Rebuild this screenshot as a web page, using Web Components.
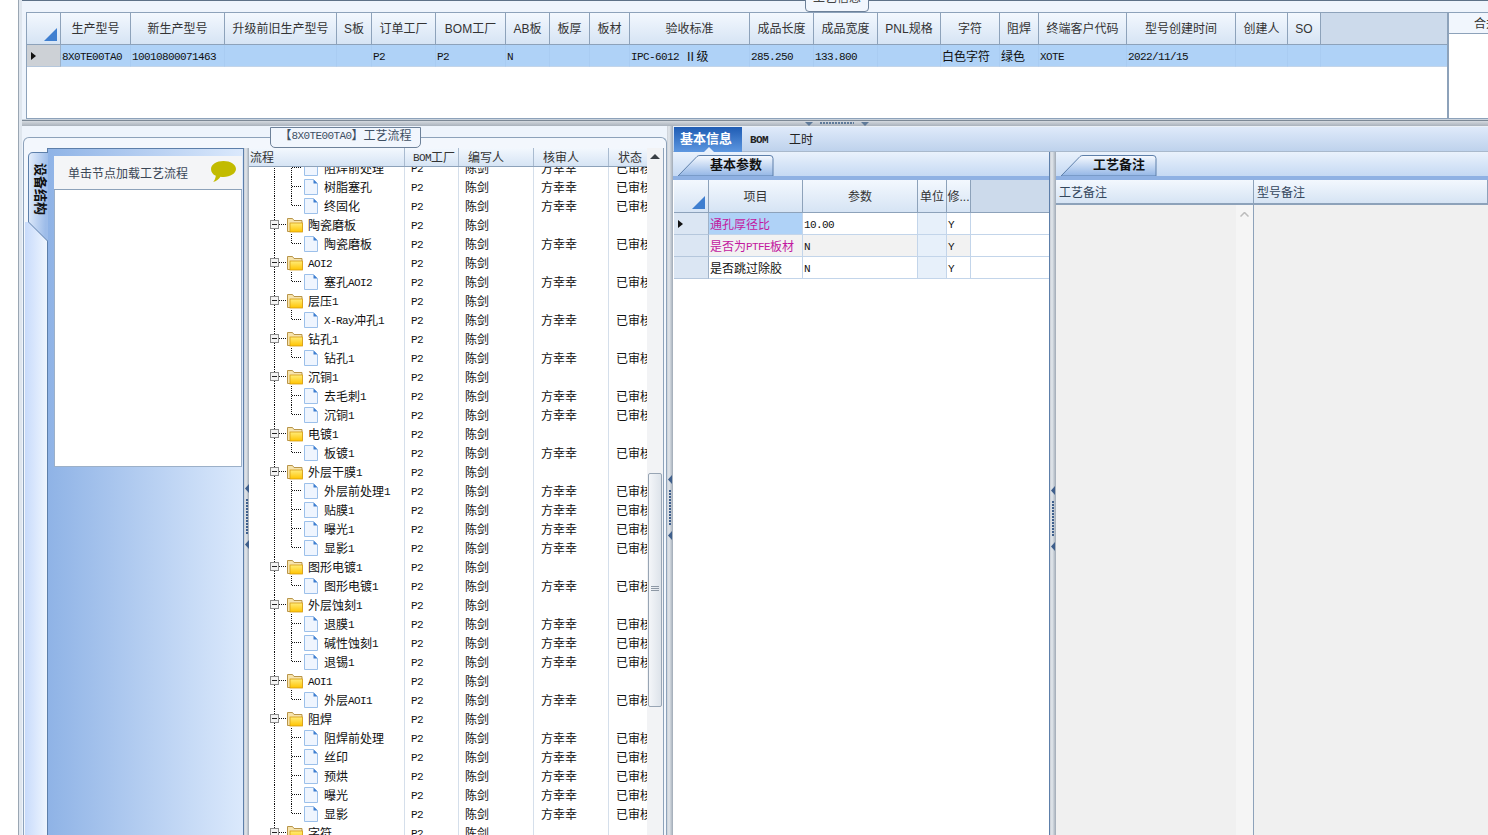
<!DOCTYPE html>
<html lang="zh">
<head>
<meta charset="utf-8">
<title>工艺信息</title>
<style>
    html, body { margin: 0; height: 100%; overflow: hidden; background: #fff; }
    body { font: 12px/19px "Noto Sans CJK SC", sans-serif; color: #111; }
</style>
</head>
<body>

<erp-shell>
    <erp-top-panel slot="top" caption="工艺信息">
        <erp-grid
            widths="34,70,94,112,35,64,70,44,40,40,120,64,64,63,59,39,88,109,52,33,1fr"
            head="生产型号|新生产型号|升级前旧生产型号|S板|订单工厂|BOM工厂|AB板|板厚|板材|验收标准|成品长度|成品宽度|PNL规格|字符|阻焊|终端客户代码|型号创建时间|创建人|SO|"
            headheight="32"
            rowheight="22"
            rows='[{"sel":true,"cells":["8X0TE00TA0","10010800071463","","","P2","P2","N","","","IPC-6012&nbsp;&nbsp;Ⅱ级","285.250","133.800","","白色字符","绿色","XOTE","2022/11/15","","",""]}]'></erp-grid>
    </erp-top-panel>
    <erp-splitter slot="top" dir="h"></erp-splitter>

    <erp-flow-panel slot="left" caption="【8X0TE00TA0】工艺流程" hint="单击节点加载工艺流程" side="设备结构">
        <erp-tree-grid></erp-tree-grid>
    </erp-flow-panel>
    <erp-splitter slot="left" dir="v" grip="349"></erp-splitter>

    <erp-detail-panel slot="right"></erp-detail-panel>
</erp-shell>

<script>
// latin runs are narrower than the cjk ones, like the old bitmap song font
function lat(text) {
    return text.replace(/[A-Za-z0-9.\-\/]+( ?[A-Za-z0-9.\-\/]+)*/g, (m) => m == "nbsp" ? m : `<span class="l">${m}</span>`);
}

const LATIN_CSS = `.l { font: 11px/1 "Liberation Mono", monospace; letter-spacing: -.6px; vertical-align: 1px; }`;

class ErpShell extends HTMLElement {
    constructor() {
        super();
        this.attachShadow({ mode: "open" });
        this.shadowRoot.innerHTML = `
            <style>
                :host {
                    display: flex;
                    flex-direction: column;
                    box-sizing: border-box;
                    height: 835px;
                    margin-left: 18px;
                    padding-left: 3px;
                    background: #dfe6ee;
                    border-left: 1px solid #9aa6b3;
                    overflow: hidden;
                }
                .bottom {
                    display: flex;
                    flex: 1;
                    min-height: 0;
                }
            </style>
            <slot name="top"></slot>
            <div class="bottom">
                <slot name="left"></slot>
                <slot name="right"></slot>
            </div>
        `;
    }
}

class ErpTopPanel extends HTMLElement {
    constructor() {
        super();
        this.attachShadow({ mode: "open" });
        this.shadowRoot.innerHTML = `
            <style>
                :host {
                    display: flex;
                    position: relative;
                    box-sizing: border-box;
                    height: 119px;
                    padding: 11px 0 0 4px;
                    background: #eef4fc;
                    border-top: 1px solid #5d7187;
                }
                .wrap {
                    display: flex;
                    flex: 1;
                    border: 1px solid #8da2ba;
                    border-right: 0;
                    background: #fff;
                }
                ::slotted(erp-grid) { flex: none; width: 1420px; }
                .side {
                    flex: 1;
                    border-left: 2px solid #8da2ba;
                    overflow: hidden;
                }
                .side div {
                    height: 20px;
                    padding-left: 25px;
                    line-height: 20px;
                    white-space: nowrap;
                    background: #f1f6fd;
                    border-bottom: 1px solid #8da2ba;
                    color: #333;
                }
                .tab {
                    position: absolute;
                    left: 783px;
                    top: -10px;
                    width: 62px;
                    height: 19px;
                    text-align: center;
                    line-height: 10px;
                    background: #f1f6fd;
                    border: 1px solid #6d8199;
                    border-radius: 0 0 4px 4px;
                    color: #444;
                }
            </style>
            <div class="tab"></div>
            <div class="wrap">
                <slot></slot>
                <div class="side"><div>合并拼板</div></div>
            </div>
        `;
        this.shadowRoot.querySelector(".tab").textContent = this.getAttribute("caption");
    }
}

class ErpGrid extends HTMLElement {
    connectedCallback() {
        const widths = this.getAttribute("widths").split(",").map((w) => w.endsWith("fr") ? w : w + "px").join(" ");
        const head = this.getAttribute("head").split("|");
        const headHeight = this.getAttribute("headheight");
        const rowHeight = this.getAttribute("rowheight");
        const rows = JSON.parse(this.getAttribute("rows"));

        const headCells = head.map((h, i) => {
            const filler = i == head.length - 1 && h == "";
            return `<div class="h${filler ? " filler" : ""}">${h}</div>`;
        }).join("");

        const rowCells = rows.map((row) => {
            const marker = row.sel ? `<svg width="5" height="8" viewBox="0 0 5 8"><path d="M0 0l5 4-5 4z" fill="#111"/></svg>` : "";
            const cells = row.cells.map((c) => {
                const cell = typeof c == "string" ? { t: c } : c;
                return `<div class="c ${cell.k || ""}">${lat(cell.t)}</div>`;
            }).join("");
            return `<div class="rh ${row.sel ? "cur" : ""}">${marker}</div><div class="row ${row.sel ? "sel" : ""} ${row.alt ? "alt" : ""}">${cells}</div>`;
        }).join("");

        this.attachShadow({ mode: "open" });
        this.shadowRoot.innerHTML = `
            <style>
                :host { display: block; overflow: hidden; }
                .grid {
                    display: grid;
                    grid-template-columns: ${widths};
                    grid-auto-rows: ${rowHeight}px;
                    grid-template-rows: ${headHeight}px;
                }
                .corner, .h {
                    box-sizing: border-box;
                    background: linear-gradient(#f3f8fe, #d6e4f4);
                    border-right: 1px solid #8da2ba;
                    border-bottom: 1px solid #8da2ba;
                }
                .corner { position: relative; }
                .corner svg { position: absolute; right: 3px; bottom: 3px; }
                .h {
                    display: flex;
                    align-items: center;
                    justify-content: center;
                    padding-top: 2px;
                    white-space: nowrap;
                    overflow: hidden;
                    color: #333;
                    font-family: "Liberation Sans", "Noto Sans CJK SC", sans-serif;
                }
                .h.filler { background: #ccdaeb; border-right: 0; }
                .rh {
                    box-sizing: border-box;
                    display: flex;
                    align-items: center;
                    padding-left: 4px;
                    background: #dbe6f3;
                    border-right: 1px solid #9fb2c8;
                    border-bottom: 1px solid #b5c7dc;
                }
                .rh.cur { background: var(--cur-bg, #cdd1d6); }
                .row { display: contents; }
                .c {
                    box-sizing: border-box;
                    padding-left: 1px;
                    line-height: 21px;
                    white-space: nowrap;
                    overflow: hidden;
                    border-right: 1px solid var(--line, #c3d5ea);
                    border-bottom: 1px solid var(--line, #c3d5ea);
                }
                .c:last-child { border-right: 0; }
                .row.sel .c { background: var(--sel-bg, #afd2f7); border-color: var(--sel-line, #a9ccf2); border-bottom-color: var(--line, #c3d5ea); }
                .row.alt .c { background: #f2f2f2; }
                .row.alt .c:last-child { background: #fff; }
                .row .c.pick { background: #afd2f7; }
                .row .c.mag { color: #c2189f; }
                .row .c.unit { background: #e7f0fa; }
                ${LATIN_CSS}
            </style>
            <div class="grid">
                <div class="corner"><svg width="13" height="13" viewBox="0 0 13 13"><path d="M13 0v13H0z" fill="#3f7fd0"/></svg></div>
                ${headCells}
                ${rowCells}
            </div>
        `;
    }
}

class ErpSplitter extends HTMLElement {
    connectedCallback() {
        const dir = this.getAttribute("dir");
        const grip = this.getAttribute("grip") || 0;
        const arrow = dir == "h"
            ? `<svg width="8" height="4" viewBox="0 0 8 4"><path d="M0 0h8l-4 4z" fill="#5f7a99"/></svg>`
            : `<svg width="4" height="9" viewBox="0 0 4 9"><path d="M4 0v9L0 4.500z" fill="#3f5f8c"/></svg>`;
        this.attachShadow({ mode: "open" });
        this.shadowRoot.innerHTML = `
            <style>
                :host { display: flex; flex: none; }
                :host([dir="h"]) {
                    height: 7px;
                    justify-content: center;
                    gap: 7px;
                    padding-left: 164px;
                    align-items: flex-start;
                    background: linear-gradient(#c9d2dc 0, #c9d2dc 1px, #7d8996 1px, #7d8996 2px, #d4d9df 2px, #aab2bc 100%);
                }
                :host([dir="v"]) {
                    width: 6px;
                    flex-direction: column;
                    align-items: center;
                    gap: 6px;
                    padding-top: ${grip}px;
                    box-sizing: border-box;
                    background: linear-gradient(90deg, #c9ced6 0, #e2e7ec 2px, #a0aab6 100%);
                }
                :host([thin]) { width: 5px; }
                :host([dir="h"]) .dots {
                    width: 34px;
                    height: 2px;
                    margin-top: 3px;
                    background: repeating-linear-gradient(90deg, #5f7a99 0 2px, transparent 2px 3px);
                }
                :host([dir="v"]) .dots {
                    width: 2px;
                    height: 35px;
                    background: repeating-linear-gradient(#3f5f8c 0 2px, transparent 2px 3px);
                }
                :host([dir="h"]) svg { margin-top: 3px; }
            </style>
            ${arrow}<div class="dots"></div>${arrow}
        `;
    }
}

class ErpFlowPanel extends HTMLElement {
    constructor() {
        super();
        this.attachShadow({ mode: "open" });
        this.shadowRoot.innerHTML = `
            <style>
                :host {
                    display: flex;
                    flex-direction: column;
                    flex: none;
                    position: relative;
                    box-sizing: border-box;
                    width: 645px;
                    background: #eef4fc;
                    padding: 11px 0 0 1px;
                }
                .caption {
                    position: absolute;
                    left: 248px;
                    top: 1px;
                    width: 149px;
                    height: 19px;
                    text-align: center;
                    line-height: 14px;
                    background: #f1f6fd;
                    border: 1px solid #6d8199;
                    border-radius: 0 0 5px 5px;
                    z-index: 1;
                    color: #3e4f63;
                }
                ${LATIN_CSS}
                .frame {
                    flex: 1;
                    display: flex;
                    min-height: 0;
                    box-sizing: border-box;
                    padding: 10px 2px 0 1px;
                    background: #f3f7fd;
                    border: 1px solid #8da2ba;
                    border-bottom: 0;
                    border-radius: 6px 6px 0 0;
                }
                .rail {
                    flex: none;
                    width: 22px;
                    padding: 4px 0 0 3px;
                    box-sizing: border-box;
                    background: linear-gradient(90deg, #c8dbfb, #eef5fe) no-repeat 0 74px;
                }
                .sidetab {
                    position: relative;
                    isolation: isolate;
                    box-sizing: border-box;
                    height: 90px;
                    width: 20px;
                    padding: 11px 0 0 4px;
                    writing-mode: vertical-rl;
                    text-orientation: sideways;
                    font-size: 13px;
                    font-weight: 700;
                    line-height: 14px;
                    color: #111;
                }
                .sidetab svg { position: absolute; left: 0; top: 0; z-index: -1; }
                .tree-side {
                    flex: none;
                    display: flex;
                    flex-direction: column;
                    width: 197px;
                    padding: 7px 1px 0 6px;
                    box-sizing: border-box;
                    background: linear-gradient(90deg, #8fb3e6, #dbe9fc);
                    border-top: 1px solid #5d7faa;
                    border-left: 1px solid #5d7faa;
                    border-right: 1px solid #5d7faa;
                }
                .hint {
                    display: flex;
                    align-items: center;
                    justify-content: space-between;
                    box-sizing: border-box;
                    height: 34px;
                    padding: 0 6px 1px 14px;
                    background: #f4f5f7;
                    border-bottom: 1px solid #8da2ba;
                    color: #3a4656;
                }
                .card {
                    height: 277px;
                    background: #fff;
                    border: 1px solid #9cb0c8;
                    border-top: 0;
                    box-sizing: border-box;
                }
                .spring { flex: 1; }
                ::slotted(erp-tree-grid) { flex: 1; min-width: 0; }
            </style>
            <div class="caption"></div>
            <div class="frame">
                <div class="rail"><div class="sidetab">
                    <svg width="20" height="90" viewBox="0 0 20 90">
                        <defs><linearGradient id="st" x1="0" y1="0" x2="1" y2=".2"><stop offset="0" stop-color="#e6effc"/><stop offset="1" stop-color="#9dbce9"/></linearGradient></defs>
                        <path d="M20 .5H5Q.5 .5 .5 5V70L20 89.500z" fill="url(#st)"/>
                        <path d="M20 .5H5Q.5 .5 .5 5V70L20 89.500" fill="none" stroke="#5d7faa"/>
                    </svg><span class="side-text"></span></div></div>
                <div class="tree-side">
                    <div class="hint">
                        <span class="hint-text"></span>
                        <svg width="25" height="22" viewBox="0 0 24 21"><path d="M12 0c6.600 0 12 3.400 12 7.600 0 4.200-5.400 7.600-12 7.600-1 0-2-.1-2.900-.2-1.600 2.200-4 4.400-7 5 1.300-1.500 2.300-3.500 2.500-5.900C1.800 13 0 10.500 0 7.600 0 3.400 5.400 0 12 0z" fill="#c2bb00"/></svg>
                    </div>
                    <div class="card"></div>
                    <div class="spring"></div>
                </div>
                <erp-splitter dir="v" grip="336" thin></erp-splitter>
                <slot></slot>
            </div>
        `;
        this.shadowRoot.querySelector(".caption").innerHTML = lat(this.getAttribute("caption"));
        this.shadowRoot.querySelector(".hint-text").textContent = this.getAttribute("hint");
        this.shadowRoot.querySelector(".side-text").textContent = this.getAttribute("side");
    }
}

const FLOW = [
    ["阻焊前处理", 1], ["树脂塞孔", 1], ["终固化", 1],
    ["陶瓷磨板", 0], ["陶瓷磨板", 1],
    ["AOI2", 0], ["塞孔AOI2", 1],
    ["层压1", 0], ["X-Ray冲孔1", 1],
    ["钻孔1", 0], ["钻孔1", 1],
    ["沉铜1", 0], ["去毛刺1", 1], ["沉铜1", 1],
    ["电镀1", 0], ["板镀1", 1],
    ["外层干膜1", 0], ["外层前处理1", 1], ["贴膜1", 1], ["曝光1", 1], ["显影1", 1],
    ["图形电镀1", 0], ["图形电镀1", 1],
    ["外层蚀刻1", 0], ["退膜1", 1], ["碱性蚀刻1", 1], ["退锡1", 1],
    ["AOI1", 0], ["外层AOI1", 1],
    ["阻焊", 0], ["阻焊前处理", 1], ["丝印", 1], ["预烘", 1], ["曝光", 1], ["显影", 1],
    ["字符", 0]
];

class ErpTreeGrid extends HTMLElement {
    constructor() {
        super();
        this.attachShadow({ mode: "open" });

        const dotted = `stroke="#111" stroke-dasharray="1 1" fill="none" shape-rendering="crispEdges"`;
        const rows = FLOW.map(([name, level], i) => {
            const next = FLOW[i + 1];
            const last = !next || next[1] == 0;
            let art;
            if (level == 0) {
                art = `<svg width="59" height="19" viewBox="0 0 59 19">
                    <defs><linearGradient id="fo" x1="0" y1="0" x2="0" y2="1"><stop offset="0" stop-color="#ffec7a"/><stop offset="1" stop-color="#ffc400"/></linearGradient></defs>
                    <path d="M25.500 0V19M30 9.500H37" ${dotted}/>
                    <rect x="21.500" y="5.500" width="8" height="8" fill="#f4f4f4" stroke="#8c8c8c"/>
                    <path d="M23 9.500h5" stroke="#222"/>
                    <path d="M38.500 3.500h5l1.500 2h8v11h-14.500z" fill="#f7e4ad" stroke="#b8954a"/>
                    <rect x="41" y="8" width="12.500" height="9" fill="url(#fo)" stroke="#d69b10" stroke-width=".8"/>
                </svg>`;
            } else {
                art = `<svg width="75" height="19" viewBox="0 0 75 19">
                    <path d="M25.500 0V19M42.500 0V${last ? 9.5 : 19}M42.500 9.500H52" ${dotted}/>
                    <path d="M55.500 2.500h9l4 4v11h-13z" fill="#eff5fe" stroke="#9cc0ea"/>
                    <path d="M64.500 2.500v4h4z" fill="#3f7fd0"/>
                </svg>`;
            }
            const reviewer = level == 0 ? "" : "方幸幸";
            const state = level == 0 ? "" : "已审核";
            return `<div class="row">
                <div class="name">${art}<span>${lat(name)}</span></div>
                <div class="c">${lat("P2")}</div>
                <div class="c">陈剑</div>
                <div class="c r">${reviewer}</div>
                <div class="c r st">${state}</div>
            </div>`;
        }).join("");

        this.shadowRoot.innerHTML = `
            <style>
                :host { display: block; position: relative; overflow: hidden; background: #fff; }
                .head, .row {
                    display: grid;
                    grid-template-columns: 156px 54px 75px 75px 38px;
                }
                .head {
                    position: relative;
                    z-index: 1;
                    height: 19px;
                    line-height: 18px;
                    background: linear-gradient(#f3f8fe, #d6e4f4);
                    border-bottom: 1px solid #8da2ba;
                    box-sizing: border-box;
                }
                .head div {
                    padding-left: 9px;
                    border-right: 1px solid #a9bbd0;
                    white-space: nowrap;
                    overflow: hidden;
                    color: #333;
                }
                .head div:first-child { padding-left: 1px; }
                .head div:nth-child(2) { padding-left: 8px; }
                .head div:last-child { border-right: 0; }
                .body { position: relative; margin-top: -9px; }
                .row { height: 19px; line-height: 19px; }
                .name { display: flex; white-space: nowrap; border-right: 1px solid #d5dfeb; }
                .name svg { flex: none; }
                .c {
                    padding-left: 6px;
                    white-space: nowrap;
                    overflow: hidden;
                    border-right: 1px solid #d5dfeb;
                }
                .c.r { padding-left: 7px; }
                .c.st { border-right: 0; }
                ${LATIN_CSS}
                .bar {
                    position: absolute;
                    right: 1px;
                    top: 0;
                    bottom: 0;
                    width: 16px;
                    z-index: 2;
                    background: #f2f3f5;
                    box-shadow: 1px 0 0 #8da2ba;
                }
                .up { position: absolute; left: 3px; top: 6px; }
                .thumb {
                    position: absolute;
                    top: 325px;
                    left: 1px;
                    width: 14px;
                    height: 234px;
                    box-sizing: border-box;
                    background: linear-gradient(90deg, #f4f6f9, #dde3ea);
                    border: 1px solid #98a5b4;
                    border-radius: 2px;
                }
                .thumb i {
                    position: absolute;
                    left: 2px;
                    right: 2px;
                    top: 112px;
                    height: 6px;
                    background: repeating-linear-gradient(#8d98a5 0 1px, transparent 1px 2px);
                }
            </style>
            <div class="head">
                <div>流程</div>
                <div>${lat("BOM")}工厂</div>
                <div>编写人</div>
                <div>核审人</div>
                <div>状态</div>
            </div>
            <div class="body">${rows}</div>
            <div class="bar">
                <svg class="up" width="10" height="5" viewBox="0 0 10 5"><path d="M0 5L5 0l5 5z" fill="#3a3f45"/></svg>
                <div class="thumb"><i></i></div>
            </div>
        `;
    }
}

class ErpSubTab extends HTMLElement {
    constructor() {
        super();
        this.attachShadow({ mode: "open" });
        this.shadowRoot.innerHTML = `
            <style>
                :host {
                    display: block;
                    flex: none;
                    height: 28px;
                    box-sizing: border-box;
                    border-bottom: 4px solid #8fb1e3;
                    background: linear-gradient(#eaf2fc, #c5d9f3);
                    position: relative;
                }
                svg { position: absolute; left: 1px; top: 3px; }
                span {
                    position: absolute;
                    left: 37px;
                    top: 3px;
                    font-size: 13px;
                    font-weight: 700;
                    line-height: 18px;
                    color: #111;
                }
            </style>
            <svg width="101" height="21" viewBox="0 0 101 21">
                <defs><linearGradient id="tb" x1="0" y1="0" x2="0" y2="1"><stop offset="0" stop-color="#f8fbff"/><stop offset="1" stop-color="#93b6e6"/></linearGradient></defs>
                <path d="M4 21L23 1.500q1-1 3-1h70q3 0 3 3V21z" fill="url(#tb)" stroke="#5d7faa"/>
            </svg>
            <span><slot></slot></span>
        `;
    }
}

class ErpDetailPanel extends HTMLElement {
    constructor() {
        super();
        this.attachShadow({ mode: "open" });
        this.shadowRoot.innerHTML = `
            <style>
                :host {
                    display: flex;
                    flex-direction: column;
                    flex: 1;
                    min-width: 0;
                    background: #fff;
                }
                .tabs {
                    flex: none;
                    display: flex;
                    align-items: center;
                    height: 26px;
                    padding-left: 1px;
                    box-sizing: border-box;
                    background: linear-gradient(#dfeafa, #bed2ec);
                    border-top: 1px solid #eaf0f7;
                    border-bottom: 1px solid #a9b9cc;
                }
                .tab { padding: 0 8px; font-size: 12px; line-height: 22px; color: #222; }
                .tab.bom { width: 19px; padding: 0 10px 0 8px; margin-right: 2px; }
                .tab.bom .l { font-weight: 700; }
                .tab.on {
                    position: relative;
                    width: 68px;
                    height: 25px;
                    box-sizing: border-box;
                    padding: 0 0 0 6px;
                    font-size: 13px;
                    font-weight: 700;
                    color: #fff;
                    background: linear-gradient(#1f5cb4, #5d97e0);
                }
                .tab.on::after {
                    content: "";
                    position: absolute;
                    left: 30px;
                    bottom: 0;
                    border: 5px solid transparent;
                    border-top: 0;
                    border-bottom-color: #e8f0fb;
                }
                ${LATIN_CSS}
                .panes { flex: 1; display: flex; min-height: 0; }
                .pane { display: flex; flex-direction: column; min-width: 0; }
                .pane.params { flex: none; box-sizing: border-box; width: 377px; border-right: 1px solid #5d7faa; }
                .pane.notes { flex: 1; }
                .params-body { flex: 1; padding-left: 1px; background: #fff; }
                .params-body erp-grid { --sel-bg: #fff; --sel-line: #c3d5ea; --cur-bg: #dbe6f3; }
                .notes-grid { flex: 1; display: grid; grid-template-columns: 198px 1fr; grid-template-rows: 25px 1fr; min-height: 0; }
                .nh {
                    padding-left: 3px;
                    line-height: 23px;
                    white-space: nowrap;
                    overflow: hidden;
                    color: #33465c;
                    background: linear-gradient(#f3f8fe, #d6e4f4);
                    border-right: 1px solid #8da2ba;
                    border-bottom: 2px solid #8da2ba;
                    box-sizing: border-box;
                }
                .nc {
                    position: relative;
                    background: #f0f0f0;
                    border-right: 1px solid #8da2ba;
                }
                .nc.first::after {
                    content: "";
                    position: absolute;
                    right: 0;
                    top: 0;
                    bottom: 0;
                    width: 17px;
                    background: #f5f5f5;
                }
                .nc svg { position: absolute; right: 4px; top: 7px; z-index: 1; }
                .nc:last-child { border-right: 0; }
            </style>
            <div class="tabs">
                <div class="tab on">基本信息</div>
                <div class="tab bom"><span class="l">BOM</span></div>
                <div class="tab">工时</div>
            </div>
            <div class="panes">
                <div class="pane params">
                    <erp-sub-tab>基本参数</erp-sub-tab>
                    <div class="params-body">
                        <erp-grid
                            widths="35,94,115,29,24,1fr"
                            head="项目|参数|单位|修...|"
                            headheight="33"
                            rowheight="22"
                            rows='[{"sel":true,"cells":[{"t":"通孔厚径比","k":"mag pick"},"10.00",{"t":"","k":"unit"},"Y",""]},{"alt":true,"cells":[{"t":"是否为PTFE板材","k":"mag"},"N",{"t":"","k":"unit"},"Y",""]},{"cells":["是否跳过除胶","N",{"t":"","k":"unit"},"Y",""]}]'></erp-grid>
                    </div>
                </div>
                <erp-splitter dir="v" grip="334"></erp-splitter>
                <div class="pane notes">
                    <erp-sub-tab>工艺备注</erp-sub-tab>
                    <div class="notes-grid">
                        <div class="nh">工艺备注</div>
                        <div class="nh">型号备注</div>
                        <div class="nc first"><svg width="9" height="5" viewBox="0 0 9 5"><path d="M.5 4.500l4-4 4 4" fill="none" stroke="#bcbcbc" stroke-width="1.500"/></svg></div>
                        <div class="nc"></div>
                    </div>
                </div>
            </div>
        `;
    }
}

customElements.define("erp-shell", ErpShell);
customElements.define("erp-top-panel", ErpTopPanel);
customElements.define("erp-grid", ErpGrid);
customElements.define("erp-splitter", ErpSplitter);
customElements.define("erp-flow-panel", ErpFlowPanel);
customElements.define("erp-tree-grid", ErpTreeGrid);
customElements.define("erp-sub-tab", ErpSubTab);
customElements.define("erp-detail-panel", ErpDetailPanel);
</script>
</body>
</html>
